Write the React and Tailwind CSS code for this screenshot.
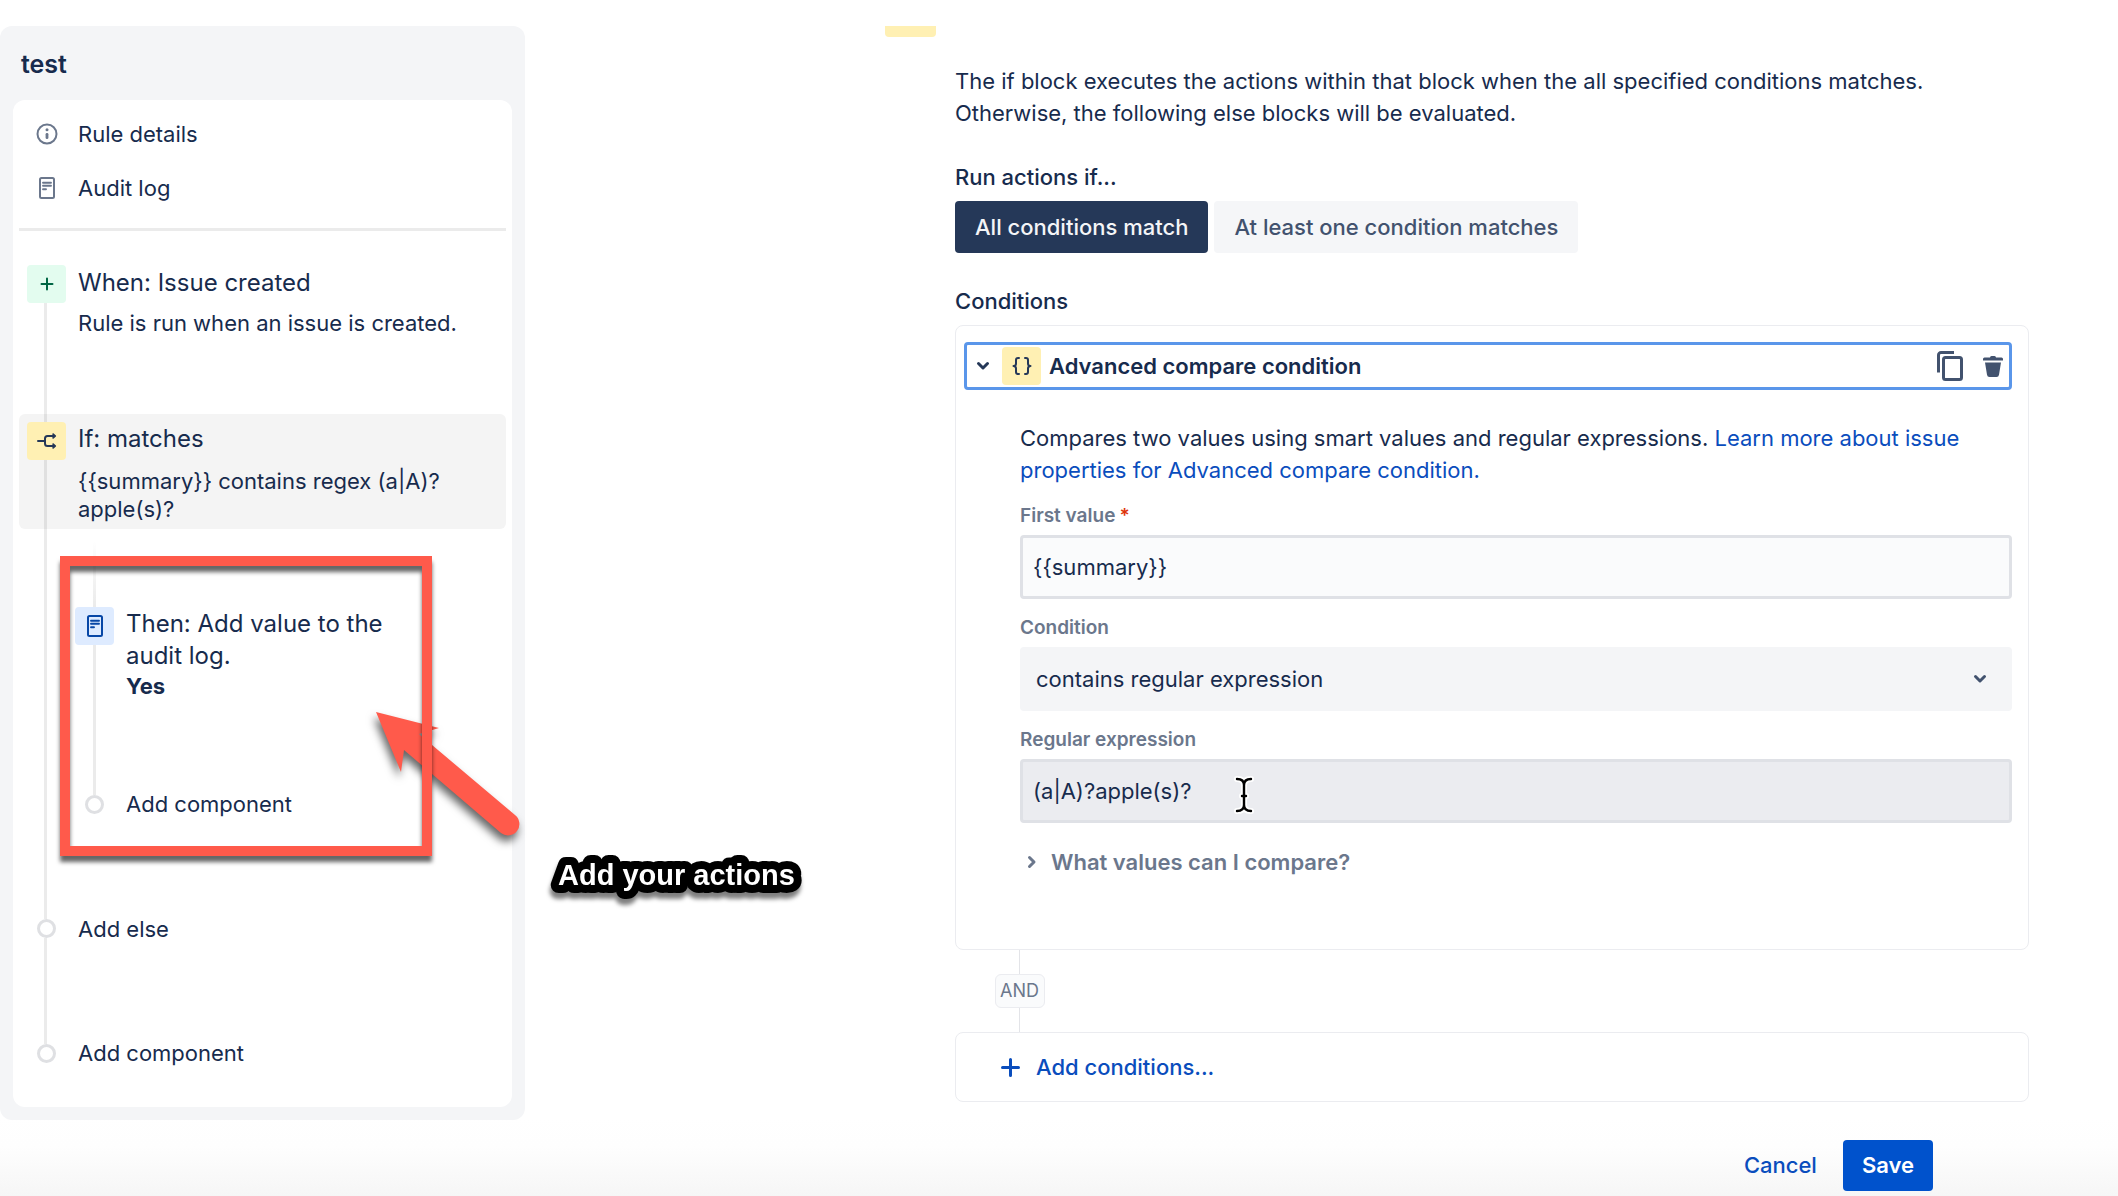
import React from "react";

function InfoIcon() {
  return (
    <svg width="22" height="22" viewBox="0 0 22 22" fill="none" aria-hidden="true">
      <circle cx="11" cy="11" r="9.5" stroke="#6B778C" strokeWidth="2" />
      <circle cx="11" cy="6.8" r="1.5" fill="#6B778C" />
      <rect x="9.6" y="10" width="2.8" height="6" rx="1.3" fill="#6B778C" />
    </svg>
  );
}

function LogIcon({ color }) {
  return (
    <svg width="16" height="22" viewBox="0 0 16 22" fill="none" stroke={color} aria-hidden="true">
      <rect x="1" y="1" width="14" height="20" rx="1.5" strokeWidth="2" />
      <path d="M4 5.800h8M4 8.800h8M4 12.200h3" strokeWidth="1.900" strokeLinecap="round" />
    </svg>
  );
}

function PlusIcon() {
  return (
    <svg width="14" height="14" viewBox="0 0 14 14" stroke="#006644" strokeWidth="2" strokeLinecap="round" aria-hidden="true">
      <path d="M7 1.500v11M1.500 7h11" />
    </svg>
  );
}

function BranchIcon() {
  return (
    <svg width="20" height="18" viewBox="0 0 20 18" fill="none" stroke="#253858" strokeWidth="2" strokeLinecap="round" strokeLinejoin="round" aria-hidden="true">
      <path d="M1 9h7M17 4h-6.500Q8 4 8 6.500v5Q8 14 10.500 14H17" />
      <path d="M16 1.800 18.500 4 16 6.200zM16 11.800l2.500 2.200-2.500 2.200z" fill="#253858" strokeWidth="1.200" />
    </svg>
  );
}

function BracesIcon() {
  return (
    <svg width="22" height="20" viewBox="0 0 22 20" fill="none" stroke="#253858" strokeWidth="2" strokeLinecap="round" strokeLinejoin="round" aria-hidden="true">
      <path d="M8 2H7a2 2 0 0 0-2 2v3.500Q5 10 2.500 10 5 10 5 12.500V16a2 2 0 0 0 2 2h1M14 2h1a2 2 0 0 1 2 2v3.500q0 2.500 2.500 2.500-2.500 0-2.500 2.500V16a2 2 0 0 1-2 2h-1" />
    </svg>
  );
}

function Chevron({ color, className }) {
  return (
    <svg className={className} width="14" height="10" viewBox="0 0 14 10" fill="none" stroke={color} strokeWidth="3" strokeLinecap="round" strokeLinejoin="round" aria-hidden="true">
      <path d="M2.500 2.500 7 7l4.500-4.500" />
    </svg>
  );
}

function CopyIcon() {
  return (
    <svg width="26" height="30" viewBox="0 0 26 30" fill="none" stroke="#42526E" strokeWidth="3" aria-hidden="true">
      <path d="M1.500 21.500V4A2.500 2.500 0 0 1 4 1.500h13" />
      <rect x="6.500" y="6.500" width="18" height="22" rx="2" />
    </svg>
  );
}

function TrashIcon() {
  return (
    <svg width="20" height="21" viewBox="0 0 20 21" fill="#42526E" aria-hidden="true">
      <path d="M7 1.500Q7 0 8.500 0h3Q13 0 13 1.500h5.500Q20 1.500 20 3v1.500H0V3q0-1.500 1.500-1.500zM2 6.500h16l-2 12.300Q15.700 21 13.500 21h-7Q4.300 21 4 18.800z" />
    </svg>
  );
}

const beamPath = "M4 3q7 0 7 6v20q0 6-7 6M18 3q-7 0-7 6v20q0 6 7 6M9 20h4";

function TextCursor() {
  return (
    <svg width="22" height="38" viewBox="0 0 22 38" fill="none" strokeLinecap="round" aria-hidden="true">
      <path d={beamPath} stroke="#fff" strokeWidth="6" />
      <path d={beamPath} stroke="#000" strokeWidth="2.400" />
    </svg>
  );
}

const lineClass = "mr-0.5 w-[3px] bg-black/8";

function Badge({ className, children }) {
  return <div className={`flex h-[38px] w-[39px] shrink-0 items-center justify-center rounded ${className}`}>{children}</div>;
}

function Dot() {
  return <div className="h-[19px] w-[19px] shrink-0 rounded-full border-[3px] border-[#dfe0e3] bg-white" />;
}

function Rail({ children }) {
  return <div className="flex w-[39px] shrink-0 flex-col items-center">{children}</div>;
}

function NavRow({ icon, label }) {
  return (
    <a href="#" className="flex h-[54px] items-center gap-3 pl-2 text-[22px]">
      <span className="flex w-[39px] justify-center">{icon}</span>
      {label}
    </a>
  );
}

function AddButton({ children }) {
  return <button className="text-[22px] leading-[19px]">{children}</button>;
}

function Sidebar() {
  return (
    <aside className="w-[525px] shrink-0 self-start rounded-xl bg-[#f4f5f7] px-[13px] pb-[13px]">
      <h1 className="flex h-[74px] items-center px-2 pt-1 text-[25px] font-semibold">test</h1>
      <div className="rounded-xl bg-white px-1.5 pt-[7px] pb-11">
        <nav>
          <NavRow icon={<InfoIcon />} label="Rule details" />
          <NavRow icon={<LogIcon color="#6B778C" />} label="Audit log" />
        </nav>
        <hr className="mt-[13px] mb-[34px] border-0 border-t-[3px] border-[#ebebeb]" />

        <section className="flex h-[149px] gap-3 pl-2">
          <Rail>
            <Badge className="bg-[#e3fcef]"><PlusIcon /></Badge>
            <div className={`flex-1 ${lineClass}`} />
          </Rail>
          <div>
            <h2 className="text-2xl leading-9">When: Issue created</h2>
            <p className="mt-2 text-[22px] leading-7">Rule is run when an issue is created.</p>
          </div>
        </section>

        <section className="flex gap-3 rounded-md bg-[#f4f4f4] pl-2">
          <Rail>
            <div className={`h-2 ${lineClass}`} />
            <Badge className="bg-[#fff0b3]"><BranchIcon /></Badge>
            <div className={`flex-1 ${lineClass}`} />
          </Rail>
          <div className="pt-[9px] pb-1.5">
            <h2 className="text-2xl leading-8">If: matches</h2>
            <p className="mt-3 text-[22px] leading-7">{"{{summary}} contains regex (a|A)?"}<br />apple(s)?</p>
          </div>
        </section>

        <div className="relative flex gap-[9px] pl-2">
          <Rail>
            <div className={`flex-1 ${lineClass}`} />
          </Rail>
          <div className="flex-1 pt-[11px] pb-[105px]">
            <section className="flex h-[255px] gap-3">
              <Rail>
                <div className="h-[67px] w-[3px] bg-linear-to-b from-black/0 to-black/8" />
                <Badge className="bg-[#deebff]"><LogIcon color="#0747A6" /></Badge>
                <div className="w-[3px] flex-1 bg-black/8" />
              </Rail>
              <div className="w-[270px] pt-[68px]">
                <h2 className="text-2xl leading-8">Then: Add value to the audit log.</h2>
                <p className="text-[22px] leading-7 font-bold">Yes</p>
              </div>
            </section>
            <div className="flex gap-3">
              <Rail><Dot /></Rail>
              <AddButton>Add component</AddButton>
            </div>
          </div>
          <svg className="pointer-events-none absolute top-[171px] left-[345px] drop-shadow-[-2px_6px_4px_rgba(0,0,0,0.6)]" width="170" height="150" viewBox="0 0 170 150" fill="#ff5a4b" aria-hidden="true">
            <path d="M12 12 75 28 55 34 151 115A11 11 0 0 1 137 133L40 50 37 72Z" />
          </svg>
          <div className="pointer-events-none absolute top-[27px] left-[41px] h-[300px] w-[372px] border-[10px] border-[#ff5a4b] drop-shadow-[0_6px_2px_rgba(0,0,0,0.6)]" />
        </div>

        <div className="flex h-[125px] gap-3 pl-2">
          <Rail>
            <Dot />
            <div className={`flex-1 ${lineClass}`} />
          </Rail>
          <div><AddButton>Add else</AddButton></div>
        </div>
        <div className="flex gap-3 pl-2">
          <Rail><Dot /></Rail>
          <AddButton>Add component</AddButton>
        </div>
      </div>
    </aside>
  );
}

const labelClass = "mb-[9px] block text-[19px] leading-5 font-semibold text-[#6b778c]";
const fieldClass = "block h-16 w-full rounded border-[3px] border-[#dfe1e6] px-2.5 text-[22px]";

function ConditionCard() {
  return (
    <section className="rounded-lg border border-[#ebecf0] pt-4 pr-4 pb-[71px] pl-2">
      <div className="flex h-12 items-center rounded border-[3px] border-[#5a96ea] pr-1.5 pl-[9px]">
        <button className="flex items-center gap-2 text-[22px] font-semibold">
          <Chevron color="#253858" className="mr-1" />
          <Badge className="bg-[#fff0b3]"><BracesIcon /></Badge>
          Advanced compare condition
        </button>
        <button className="ml-auto" aria-label="Duplicate"><CopyIcon /></button>
        <button className="ml-5" aria-label="Delete"><TrashIcon /></button>
      </div>
      <div className="pt-8 pl-14">
        <p className="text-[22px] leading-8">
          Compares two values using smart values and regular expressions.{" "}
          <a href="#" className="text-[#0a4dbd]">Learn more about issue<br />properties for Advanced compare condition.</a>
        </p>
        <div className="mt-5">
          <label htmlFor="first" className={labelClass}>First value<span className="ml-1 text-[#de350b]">*</span></label>
          <input id="first" defaultValue="{{summary}}" className={`${fieldClass} bg-[#fafbfc]`} />
        </div>
        <div className="mt-[19px]">
          <label htmlFor="cond" className={labelClass}>Condition</label>
          <div className="relative">
            <select id="cond" className="block h-16 w-full appearance-none rounded bg-[#f4f5f7] px-4 text-[22px]">
              <option>contains regular expression</option>
            </select>
            <Chevron color="#42526E" className="pointer-events-none absolute top-[27px] right-[25px]" />
          </div>
        </div>
        <div className="relative mt-[19px]">
          <label htmlFor="regex" className={labelClass}>Regular expression</label>
          <input id="regex" defaultValue="(a|A)?apple(s)?" className={`${fieldClass} bg-[#ebecf0]`} />
          <div className="pointer-events-none absolute bottom-[9px] left-[213px]"><TextCursor /></div>
        </div>
        <button className="mt-[23px] flex items-center gap-3 pl-[5px] text-[22px] leading-8 font-semibold text-[#6b778c]">
          <Chevron color="#6B778C" className="-rotate-90" />
          What values can I compare?
        </button>
      </div>
    </section>
  );
}

function Main() {
  return (
    <main className="flex min-w-0 flex-1 gap-[19px] pr-[89px] pl-[360px]">
      <div className="h-[11px] w-[51px] shrink-0 rounded-b bg-[#fff0b3]" />
      <div className="min-w-0 flex-1 pt-[39px]">
        <p className="text-[22px] leading-8">
          The if block executes the actions within that block when the all specified conditions matches.<br />
          Otherwise, the following else blocks will be evaluated.
        </p>
        <h2 className="mt-9 text-[22px] leading-6 font-medium">Run actions if...</h2>
        <div className="mt-3 flex gap-1.5">
          <button className="h-[52px] rounded bg-[#253858] px-5 text-[22px] font-medium text-[#f4f5f7]">All conditions match</button>
          <button className="h-[52px] rounded bg-[#f5f6f8] px-5 text-[22px] font-medium text-[#42526e]">At least one condition matches</button>
        </div>
        <h2 className="mt-9 mb-3 text-[22px] leading-6 font-medium">Conditions</h2>
        <ConditionCard />
        <div className="flex w-[129px] flex-col items-center">
          <div className="h-6 w-px bg-[#e3e4e8]" />
          <div className="flex h-[34px] w-[50px] items-center justify-center rounded-md border border-[#ebecf0] bg-[#fafbfc] text-lg text-[#6b778c]">AND</div>
          <div className="h-6 w-px bg-[#e3e4e8]" />
        </div>
        <div className="flex h-[70px] items-center rounded-lg border border-[#ebecf0] pl-[45px]">
          <button className="flex items-center gap-4 text-[22px] font-medium text-[#0a4dbd]">
            <svg width="19" height="19" viewBox="0 0 19 19" stroke="#0a4dbd" strokeWidth="3" strokeLinecap="round" aria-hidden="true">
              <path d="M9.500 1.500v16M1.500 9.500h16" />
            </svg>
            Add conditions...
          </button>
        </div>
        <footer className="mt-[38px] mr-24 mb-[5px] flex h-[51px] justify-end gap-[26px] text-[22px]">
          <button className="font-medium text-[#0a4dbd]">Cancel</button>
          <button className="rounded bg-[#0052cc] px-[19px] font-semibold text-white">Save</button>
        </footer>
      </div>
    </main>
  );
}

export default function App() {
  return (
    <div className="relative flex min-h-screen bg-[linear-gradient(to_top,#f6f6f6,#fefefe_50px,#fff_80px)] pt-[26px] font-['Inter',sans-serif] text-[#172b4d]">
      <Sidebar />
      <Main />
      <svg className="pointer-events-none absolute top-[846px] left-[540px] drop-shadow-[-1px_6px_2px_rgba(0,0,0,0.5)]" width="280" height="64" viewBox="0 0 280 64">
        <text x="18" y="39" fill="#fff" stroke="#000" strokeWidth="16" strokeLinejoin="round" paintOrder="stroke" className="font-['Liberation_Sans',sans-serif] text-[29px] font-bold">
          Add your actions
        </text>
      </svg>
    </div>
  );
}
